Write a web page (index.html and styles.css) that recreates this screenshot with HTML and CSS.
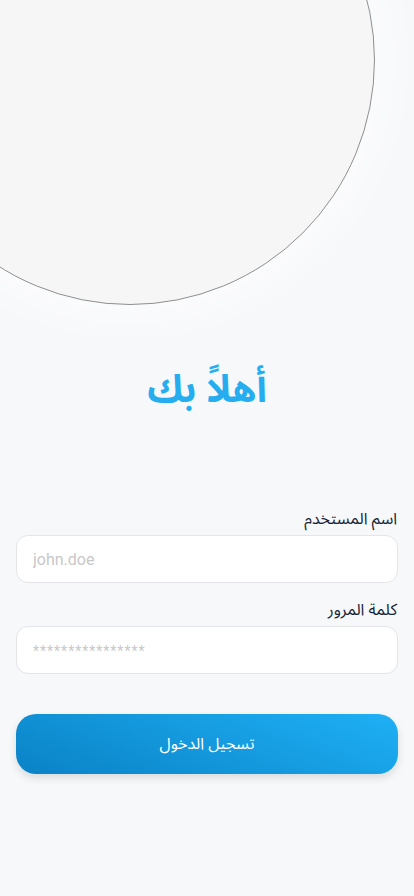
FILE: index.html
```html
<!DOCTYPE html>
<html lang="ar" dir="rtl">
<head>
<meta charset="utf-8">
<link rel="stylesheet" href="styles.css">
</head>
<body>
<div class="page">
  <div class="blob"></div>
  <main class="content">
    <h1 class="title">أهلاً بك</h1>
    <form class="form">
      <label class="label">اسم المستخدم</label>
      <input class="field" type="text" dir="ltr" placeholder="john.doe">
      <label class="label">كلمة المرور</label>
      <input class="field pass" type="text" dir="ltr" placeholder="****************">
      <button class="btn" type="button">تسجيل الدخول</button>
    </form>
  </main>
</div>
</body>
</html>
```
FILE: styles.css
```css
html, body { margin: 0; padding: 0; }
body {
  background: #f7f8fa;
  font-family: "Noto Sans Arabic", "DejaVu Sans", "Noto Sans", sans-serif;
}
.page {
  position: relative;
  width: 414px;
  height: 896px;
  overflow: hidden;
}
.blob {
  position: absolute;
  left: -115px;
  top: -185px;
  width: 488px;
  height: 488px;
  border-radius: 50%;
  background: #f6f6f6;
  border: 1px solid #8f8f8f;
  box-shadow: 0 0 40px 20px rgba(255,255,255,0.5);
}
.content {
  position: relative;
  padding: 352px 16px 0;
}
.title {
  margin: 0;
  text-align: center;
  color: #25adf0;
  font-size: 38px;
  font-weight: 700;
  line-height: 76px;
}
.form {
  display: flex;
  flex-direction: column;
  margin-top: 79px;
}
.label {
  display: block;
  font-size: 16px;
  color: #162638;
  line-height: 24px;
  height: 24px;
  margin-bottom: 4px;
  padding-right: 1px;
}
.field {
  box-sizing: border-box;
  height: 48px;
  width: 100%;
  border: 1px solid #e3e5e8;
  border-radius: 12px;
  background: #fff;
  padding: 0 16px;
  font-family: "Roboto", "Liberation Sans", sans-serif;
  font-size: 16px;
  margin-bottom: 15px;
  outline: none;
}
.field::placeholder { color: #c8c8c8; }
.field.pass::placeholder { letter-spacing: 1px; font-size: 14px; }
.btn {
  margin-top: 25px;
  height: 60px;
  border: none;
  border-radius: 20px;
  background: linear-gradient(200deg, #1fb0f5 0%, #0a82c6 100%);
  color: #fff;
  font-family: "Noto Sans Arabic", "DejaVu Sans", sans-serif;
  font-size: 16px;
  box-shadow: 0 4px 8px rgba(0,0,0,0.12);
}
```
